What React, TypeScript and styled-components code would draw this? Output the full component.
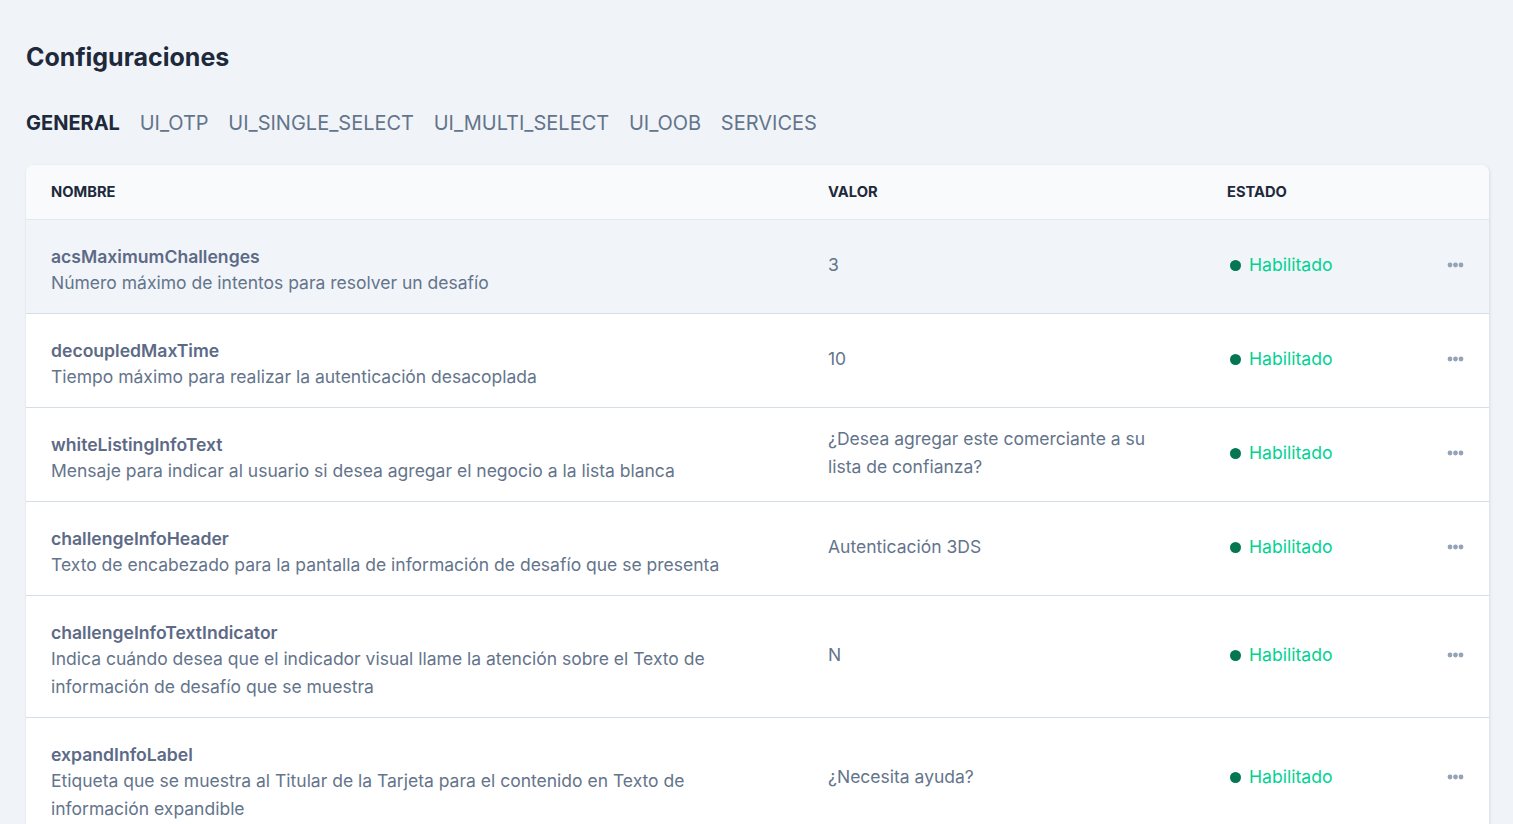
import React from "react";
import styled, { createGlobalStyle } from "styled-components";

const GlobalStyle = createGlobalStyle`
  html, body {
    margin: 0;
    padding: 0;
    background: #f0f4f8;
    font-family: Inter, "Noto Sans", sans-serif;
  }
  * { box-sizing: border-box; }
`;

const Page = styled.div`
  padding: 41px 24px 0 26px;
  min-height: 824px;
`;

const Title = styled.h1`
  margin: 0;
  font-size: 25px;
  line-height: 33px;
  font-weight: 700;
  color: #1e293b;
`;

const Tabs = styled.nav`
  display: flex;
  align-items: baseline;
  gap: 19.7px;
  margin-top: 35px;
  margin-bottom: 28px;
`;

const Tab = styled.button<{ $active?: boolean }>`
  border: none;
  background: none;
  padding: 0;
  font-family: inherit;
  font-size: 20px;
  line-height: 28px;
  font-weight: ${(p) => (p.$active ? 700 : 400)};
  color: ${(p) => (p.$active ? "#1e293b" : "#64748b")};
  cursor: pointer;
`;

const Card = styled.div`
  width: 1463px;
  background: #ffffff;
  border-radius: 8px 8px 0 0;
  box-shadow: 0 1px 3px rgba(15, 23, 42, 0.08), 2px 0 3px rgba(15, 23, 42, 0.04);
  overflow: hidden;
`;

const GRID = "777px 399px 1fr 16px";

const HeaderRow = styled.div`
  display: grid;
  grid-template-columns: ${GRID};
  align-items: center;
  height: 55px;
  padding: 0 26px 0 25px;
  background: #f8fafc;
  border-bottom: 1px solid #e2e8f0;
`;

const HeadCell = styled.div`
  font-size: 14.7px;
  font-weight: 700;
  color: #1e293b;
  text-transform: uppercase;
`;

const Row = styled.div<{ $hover?: boolean }>`
  display: grid;
  grid-template-columns: ${GRID};
  padding: 0 26px 0 25px;
  background: ${(p) => (p.$hover ? "#f1f5f9" : "#ffffff")};
  border-bottom: 1px solid #d5dde7;
`;

const NameCell = styled.div`
  padding: 25px 80px 16px 0;
`;

const Name = styled.div`
  font-size: 17.6px;
  line-height: 24px;
  font-weight: 600;
  color: #5d6a86;
`;

const Desc = styled.div`
  font-size: 17.5px;
  line-height: 28px;
  color: #64748b;
`;

const MidCell = styled.div`
  display: flex;
  align-items: center;
  padding: 17px 60px 20px 0;
  font-size: 17.5px;
  line-height: 28px;
  color: #64748b;
`;

const Status = styled.div`
  display: flex;
  align-items: center;
  gap: 8px;
  font-size: 17.6px;
  color: #00d292;
`;

const Dot = styled.span`
  width: 11px;
  height: 11px;
  border-radius: 50%;
  background: #047651;
  margin-left: 3px;
`;

const MoreButton = styled.button`
  border: none;
  background: none;
  padding: 0;
  display: flex;
  align-items: center;
  cursor: pointer;
`;

const MoreIcon = () => (
  <svg width="17" height="6" viewBox="0 0 17 6">
    <circle cx="3" cy="3" r="2.4" fill="#94a3b8" />
    <circle cx="8.5" cy="3" r="2.4" fill="#94a3b8" />
    <circle cx="14" cy="3" r="2.4" fill="#94a3b8" />
  </svg>
);

const rows = [
  {
    name: "acsMaximumChallenges",
    desc: "Número máximo de intentos para resolver un desafío",
    value: "3",
    hover: true,
  },
  {
    name: "decoupledMaxTime",
    desc: "Tiempo máximo para realizar la autenticación desacoplada",
    value: "10",
  },
  {
    name: "whiteListingInfoText",
    desc: "Mensaje para indicar al usuario si desea agregar el negocio a la lista blanca",
    value: "¿Desea agregar este comerciante a su lista de confianza?",
  },
  {
    name: "challengeInfoHeader",
    desc: "Texto de encabezado para la pantalla de información de desafío que se presenta",
    value: "Autenticación 3DS",
  },
  {
    name: "challengeInfoTextIndicator",
    desc: "Indica cuándo desea que el indicador visual llame la atención sobre el Texto de información de desafío que se muestra",
    value: "N",
  },
  {
    name: "expandInfoLabel",
    desc: "Etiqueta que se muestra al Titular de la Tarjeta para el contenido en Texto de información expandible",
    value: "¿Necesita ayuda?",
  },
];

const tabs = ["GENERAL", "UI_OTP", "UI_SINGLE_SELECT", "UI_MULTI_SELECT", "UI_OOB", "SERVICES"];

export default function App() {
  return (
    <>
      <GlobalStyle />
      <Page>
        <Title>Configuraciones</Title>
        <Tabs>
          {tabs.map((t, i) => (
            <Tab key={t} $active={i === 0}>
              {t}
            </Tab>
          ))}
        </Tabs>
        <Card>
          <HeaderRow>
            <HeadCell>Nombre</HeadCell>
            <HeadCell>Valor</HeadCell>
            <HeadCell>Estado</HeadCell>
            <span />
          </HeaderRow>
          {rows.map((r) => (
            <Row key={r.name} $hover={r.hover}>
              <NameCell>
                <Name>{r.name}</Name>
                <Desc>{r.desc}</Desc>
              </NameCell>
              <MidCell>{r.value}</MidCell>
              <MidCell>
                <Status>
                  <Dot />
                  Habilitado
                </Status>
              </MidCell>
              <MidCell>
                <MoreButton aria-label="Más opciones">
                  <MoreIcon />
                </MoreButton>
              </MidCell>
            </Row>
          ))}
        </Card>
      </Page>
    </>
  );
}
